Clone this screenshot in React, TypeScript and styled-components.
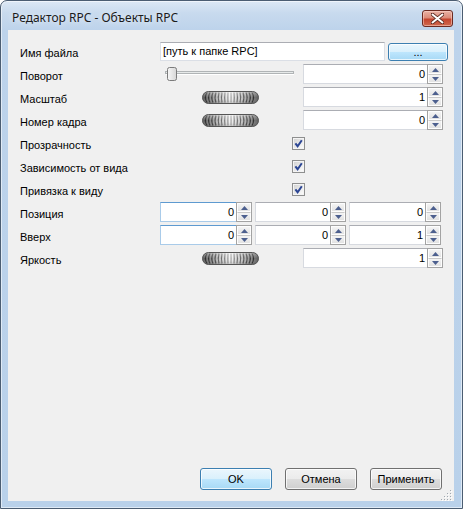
import React from 'react';
import styled, { createGlobalStyle } from 'styled-components';

const GlobalStyle = createGlobalStyle`
  html, body { margin: 0; padding: 0; background: #ffffff; }
  body { font-family: "Liberation Sans", Arial, sans-serif; }
  * { box-sizing: border-box; }
`;

const Window = styled.div`
  width: 463px;
  height: 509px;
  display: flex;
  flex-direction: column;
  border: 1px solid #4b5d72;
  border-radius: 7px 7px 0 0;
  background: linear-gradient(180deg, #dce8f5 0px, #c8daee 12px, #bdd3eb 29px, #b9d1ea 100%);
  box-shadow: inset 0 0 0 1px rgba(255, 255, 255, 0.55);
  padding: 0 8px 7px 7px;
`;

const TitleBar = styled.div`
  height: 29px;
  flex-shrink: 0;
  display: flex;
  justify-content: space-between;
  align-items: flex-start;
  padding: 0 1px 0 4px;
`;

const Title = styled.div`
  margin-top: 9px;
  font-family: "Noto Sans", "Liberation Sans", sans-serif;
  font-size: 12px;
  line-height: 16px;
  color: #1b1b1b;
  text-shadow: 0 0 6px rgba(255, 255, 255, 0.9);
`;

const CloseButton = styled.div`
  margin-top: 9px;
  width: 31px;
  height: 17px;
  border: 1px solid #6b2a22;
  border-radius: 3px;
  background: linear-gradient(180deg, #e9b2a6 0%, #dc8b79 45%, #c4452f 55%, #cf6a4f 100%);
  box-shadow: inset 0 0 0 1px rgba(255, 220, 210, 0.5);
  display: flex;
  align-items: center;
  justify-content: center;
`;

const Client = styled.div`
  flex: 1;
  position: relative;
  background: #f0f0f0;
  display: flex;
  flex-direction: column;
  padding: 11px 6px 11px 12px;
`;

const Form = styled.div`
  display: flex;
  flex-direction: column;
  gap: 3px;
`;

const Row = styled.div`
  display: flex;
  align-items: center;
  height: 20px;
`;

const Label = styled.div`
  width: 140px;
  flex-shrink: 0;
  font-size: 11px;
  padding-top: 3px;
  color: #000;
  white-space: nowrap;
`;

const FileInput = styled.div`
  width: 225px;
  height: 19px;
  background: #fff;
  border: 1px solid #dbdfe6;
  border-top-color: #abadb3;
  font-size: 11px;
  line-height: 17px;
  padding-left: 2px;
  color: #000;
`;

const PushButton = styled.div<{ $w: number; $blue?: boolean; $h?: number }>`
  width: ${(p) => p.$w}px;
  height: ${(p) => p.$h ?? 22}px;
  flex-shrink: 0;
  display: flex;
  align-items: center;
  justify-content: center;
  font-size: 11px;
  color: #000;
  border: 1px solid ${(p) => (p.$blue ? '#3c7fb1' : '#707070')};
  border-radius: 3px;
  background: ${(p) =>
    p.$blue
      ? 'linear-gradient(180deg, #eaf6fd 0%, #d9f0fc 50%, #bee6fd 50%, #a7d9f5 100%)'
      : 'linear-gradient(180deg, #f2f2f2 0%, #ebebeb 50%, #dddddd 50%, #cfcfcf 100%)'};
  box-shadow: inset 0 0 0 1px rgba(255, 255, 255, 0.75);
`;

const BrowseButton = styled(PushButton)`
  margin-left: 3px;
  margin-top: 1px;
`;

const LeftZone = styled.div<{ $center?: boolean }>`
  width: 143px;
  flex-shrink: 0;
  height: 20px;
  display: flex;
  align-items: center;
  justify-content: ${(p) => (p.$center ? 'center' : 'flex-start')};
  padding-right: ${(p) => (p.$center ? '3px' : '0')};
`;

const SpinFrame = styled.div<{ $w: number; $focus?: boolean }>`
  width: ${(p) => p.$w}px;
  height: 20px;
  flex-shrink: 0;
  display: flex;
  background: #fff;
  border: 1px solid ${(p) => (p.$focus ? '#a9cbe9' : '#d7dae0')};
  border-top-color: ${(p) => (p.$focus ? '#5e9ad0' : '#abadb3')};
  border-right: none;
`;

const SpinValue = styled.div`
  flex: 1;
  text-align: right;
  font-size: 11px;
  line-height: 18px;
  padding-right: 2px;
  color: #000;
`;

const SpinButtons = styled.div`
  width: 16px;
  margin: -1px 0 -1px 0;
  display: flex;
  flex-direction: column;
  border: 1px solid #a3a3a3;
  background: #fff;
`;

const SpinArrow = styled.div`
  flex: 1;
  display: flex;
  align-items: center;
  justify-content: center;
  background: linear-gradient(180deg, #f4f4f4, #e2e2e2);
  border: 1px solid #fdfdfd;
  & + & {
    border-top: 1px solid #c9c9c9;
  }
`;

const CheckCell = styled.div`
  padding-left: 132px;
  display: flex;
  align-items: center;
`;

const Triple = styled.div`
  display: flex;
  gap: 3px;
`;

const ButtonBar = styled.div`
  margin-top: auto;
  display: flex;
  justify-content: flex-end;
  gap: 13px;
  padding-right: 6px;
`;

const Grip = styled.div`
  position: absolute;
  right: 1px;
  bottom: 1px;
  width: 12px;
  height: 12px;
`;

function Spin({ value, w = 140, focus }: { value: string; w?: number; focus?: boolean }) {
  return (
    <SpinFrame $w={w} $focus={focus}>
      <SpinValue>{value}</SpinValue>
      <SpinButtons>
        <SpinArrow>
          <svg width="7" height="4" viewBox="0 0 7 4">
            <path d="M0 4 L3.5 0 L7 4 Z" fill="#4c5f8e" />
          </svg>
        </SpinArrow>
        <SpinArrow>
          <svg width="7" height="4" viewBox="0 0 7 4">
            <path d="M0 0 L3.5 4 L7 0 Z" fill="#4c5f8e" />
          </svg>
        </SpinArrow>
      </SpinButtons>
    </SpinFrame>
  );
}

function Wheel() {
  const arcs = [];
  for (let x = 5; x <= 51; x += 3) {
    const d = (x - 28) / 23;
    const k = d * 3.2;
    const op = 0.4 + Math.abs(d) * 0.55;
    arcs.push(
      <path
        key={x}
        d={`M${x} 1.5 Q${x + k} 6.5 ${x} 11.5`}
        stroke="#2a2a2a"
        strokeOpacity={op}
        strokeWidth="1.2"
        fill="none"
      />
    );
  }
  return (
    <svg width="57" height="13" viewBox="0 0 57 13">
      <defs>
        <linearGradient id="wheelGrad" x1="0" x2="1" y1="0" y2="0">
          <stop offset="0" stopColor="#5c5c5c" />
          <stop offset="0.25" stopColor="#b8b8b8" />
          <stop offset="0.5" stopColor="#f6f6f6" />
          <stop offset="0.75" stopColor="#b8b8b8" />
          <stop offset="1" stopColor="#5c5c5c" />
        </linearGradient>
        <linearGradient id="wheelShade" x1="0" x2="0" y1="0" y2="1">
          <stop offset="0" stopColor="#ffffff" stopOpacity="0.35" />
          <stop offset="0.5" stopColor="#ffffff" stopOpacity="0" />
          <stop offset="1" stopColor="#000000" stopOpacity="0.2" />
        </linearGradient>
      </defs>
      <rect x="0.5" y="0.5" width="56" height="12" rx="6" fill="url(#wheelGrad)" />
      {arcs}
      <rect x="0.5" y="0.5" width="56" height="12" rx="6" fill="url(#wheelShade)" stroke="#555" strokeWidth="1" />
    </svg>
  );
}

function Slider() {
  return (
    <svg width="138" height="20" viewBox="0 0 138 20">
      <rect x="5.5" y="7.5" width="128" height="2" fill="#e7eaea" stroke="#b0b4b6" strokeWidth="1" />
      <line x1="6" y1="10.5" x2="134" y2="10.5" stroke="#ffffff" />
      <defs>
        <linearGradient id="thumbGrad" x1="0" x2="1" y1="0" y2="0">
          <stop offset="0" stopColor="#f7f7f7" />
          <stop offset="1" stopColor="#d6d6d6" />
        </linearGradient>
      </defs>
      <path
        d="M7.5 5.5 Q7.5 3.5 9.5 3.5 L14.5 3.5 Q16.5 3.5 16.5 5.5 L16.5 14.5 Q16.5 16.5 14.5 16.5 L9.5 16.5 Q7.5 16.5 7.5 14.5 Z"
        fill="url(#thumbGrad)"
        stroke="#7b7b7b"
      />
    </svg>
  );
}

function CheckBox() {
  return (
    <svg width="13" height="13" viewBox="0 0 13 13">
      <defs>
        <linearGradient id="cbGrad" x1="0" x2="1" y1="0" y2="1">
          <stop offset="0" stopColor="#d4d4d4" />
          <stop offset="1" stopColor="#fbfbfb" />
        </linearGradient>
      </defs>
      <rect x="0.5" y="0.5" width="12" height="12" fill="#f4f4f4" stroke="#8e8f8f" />
      <rect x="2" y="2" width="9" height="9" fill="url(#cbGrad)" />
      <path d="M3.4 6.4 L5.6 9.2 L9.8 3.2" stroke="#2c4694" strokeWidth="2" fill="none" strokeLinejoin="miter" />
    </svg>
  );
}

export default function App() {
  return (
    <>
      <GlobalStyle />
      <Window>
        <TitleBar>
          <Title>Редактор RPC - Объекты RPC</Title>
          <CloseButton>
            <svg width="13" height="11" viewBox="0 0 13 11">
              <path
                d="M1 1 L12 10 M12 1 L1 10"
                stroke="#5a2a22"
                strokeWidth="3.6"
                strokeLinecap="round"
              />
              <path d="M1.5 1.5 L11.5 9.5 M11.5 1.5 L1.5 9.5" stroke="#ffffff" strokeWidth="2" strokeLinecap="round" />
            </svg>
          </CloseButton>
        </TitleBar>
        <Client>
          <Form>
            <Row>
              <Label>Имя файла</Label>
              <FileInput>[путь к папке RPC]</FileInput>
              <BrowseButton $w={60} $h={18} $blue>
                ...
              </BrowseButton>
            </Row>
            <Row>
              <Label>Поворот</Label>
              <LeftZone>
                <Slider />
              </LeftZone>
              <Spin value="0" />
            </Row>
            <Row>
              <Label>Масштаб</Label>
              <LeftZone $center>
                <Wheel />
              </LeftZone>
              <Spin value="1" />
            </Row>
            <Row>
              <Label>Номер кадра</Label>
              <LeftZone $center>
                <Wheel />
              </LeftZone>
              <Spin value="0" />
            </Row>
            <Row>
              <Label>Прозрачность</Label>
              <CheckCell>
                <CheckBox />
              </CheckCell>
            </Row>
            <Row>
              <Label>Зависимость от вида</Label>
              <CheckCell>
                <CheckBox />
              </CheckCell>
            </Row>
            <Row>
              <Label>Привязка к виду</Label>
              <CheckCell>
                <CheckBox />
              </CheckCell>
            </Row>
            <Row>
              <Label>Позиция</Label>
              <Triple>
                <Spin value="0" w={92} focus />
                <Spin value="0" w={91} />
                <Spin value="0" w={92} />
              </Triple>
            </Row>
            <Row>
              <Label>Вверх</Label>
              <Triple>
                <Spin value="0" w={92} focus />
                <Spin value="0" w={91} />
                <Spin value="1" w={92} />
              </Triple>
            </Row>
            <Row>
              <Label>Яркость</Label>
              <LeftZone $center>
                <Wheel />
              </LeftZone>
              <Spin value="1" />
            </Row>
          </Form>
          <ButtonBar>
            <PushButton $w={72} $blue>
              OK
            </PushButton>
            <PushButton $w={72}>Отмена</PushButton>
            <PushButton $w={72}>Применить</PushButton>
          </ButtonBar>
          <Grip>
            <svg width="12" height="12" viewBox="0 0 12 12">
              {[
                [10, 2],
                [10, 5],
                [7, 5],
                [10, 8],
                [7, 8],
                [4, 8],
                [10, 11],
                [7, 11],
                [4, 11],
                [1, 11],
              ].map(([x, y], i) => (
                <g key={i}>
                  <rect x={x} y={y - 1} width="1" height="1" fill="#ffffff" />
                  <rect x={x - 1} y={y - 2} width="1" height="1" fill="#a0a8b0" />
                </g>
              ))}
            </svg>
          </Grip>
        </Client>
      </Window>
    </>
  );
}
